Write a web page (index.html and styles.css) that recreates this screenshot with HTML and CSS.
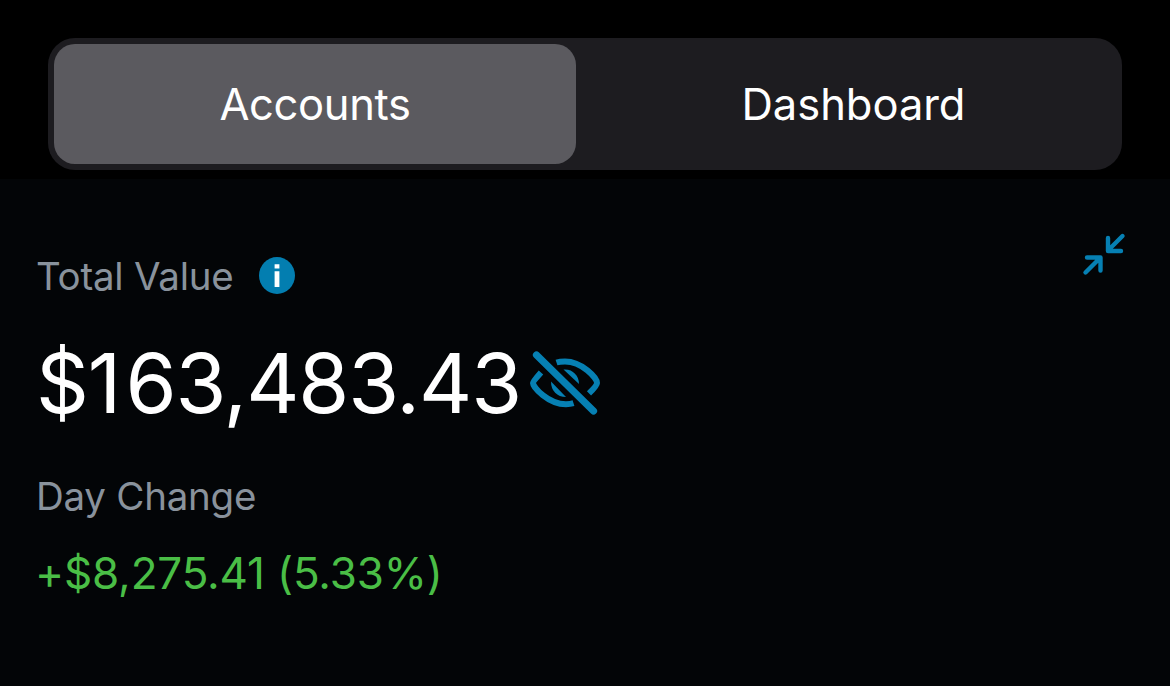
FILE: index.html
```html
<!DOCTYPE html>
<html lang="en">
<head>
    <meta charset="UTF-8">
    <meta name="viewport" content="width=device-width, initial-scale=1.0">
    <title>Accounts</title>
    <link rel="stylesheet" href="styles.css">
</head>
<body>
    <header class="header">
        <nav class="tabs">
            <a class="tab tab-accounts active">Accounts</a>
            <a class="tab tab-dashboard">Dashboard</a>
        </nav>
    </header>

    <main class="summary">
        <div class="values">
            <div class="label-row">
                <span class="label label-total">Total Value</span>
                <svg class="info-icon" viewBox="0 0 36 37">
                    <ellipse cx="18" cy="18.5" rx="18" ry="18.5" fill="#037eb0"/>
                    <path d="M15.600 7.200h4.800v4.400h-4.800zM15.600 14.200h4.800v15.800h-4.800z" fill="#fff"/>
                </svg>
            </div>
            <div class="total-row">
                <span class="total">$<span class="one">1</span>63,483.43</span>
                <svg class="eye-icon" viewBox="8 8 74 70">
                    <g fill="none" stroke="#0680b3" stroke-width="6">
                        <path d="M16.500 15L73.500 71" stroke-width="7.200" stroke-linecap="round"/>
                        <path d="M21 32.500C17 37 13 41.500 13 43C13 47 28 64.200 46 64.200C49 64.200 51 64 53.500 63.200"/>
                        <path d="M36.500 22.500C39 21.700 42 21.500 45 21.500C62 21.500 77 38 77 43C77 45.500 73 49.500 69 53.300"/>
                    </g>
                    <path d="M31 41.500C31 51 37 57 46 57z" fill="#0680b3"/>
                    <path d="M43.500 29.500C52 28.500 59 35 59 44z" fill="#0680b3"/>
                </svg>
            </div>
            <div class="label label-day">Day Change</div>
            <div class="change">+$8,275.41 (5.33%)</div>
        </div>
        <svg class="collapse-icon" viewBox="0 0 44 44">
            <g fill="none" stroke="#0680b3" stroke-width="4.400" stroke-linecap="round" stroke-linejoin="round">
                <path d="M40.500 4L26 18.500M26 6V19H39"/>
                <path d="M3.500 40.500L18 26M5 25.500H18.500V38.500"/>
            </g>
        </svg>
    </main>
</body>
</html>
```

FILE: styles.css
```css
* {
    box-sizing: border-box;
}
body {
    margin: 0;
    min-height: 686px;
    background-color: #030507;
    color: #fff;
    font-family: Inter, "Liberation Sans", sans-serif;
}
.header {
    height: 179px;
    padding: 38px 48px 0;
    background-color: #000;
}
.tabs {
    display: grid;
    grid-template-columns: 522px 1fr;
    gap: 15px;
    height: 132px;
    padding: 6px;
    border-radius: 27px;
    background-color: #1d1c20;
}
.tab {
    display: flex;
    align-items: center;
    justify-content: center;
    border-radius: 21px;
    font-size: 43.5px;
}
.tab-accounts {
    letter-spacing: -0.35px;
}
.tab-dashboard {
    letter-spacing: -0.05px;
}
.tab.active {
    background-color: #5b5a5f;
}
.summary {
    display: flex;
    justify-content: space-between;
    padding: 53px 44px 0 36px;
}
.label-row {
    display: flex;
    align-items: center;
    height: 88px;
}
.label {
    color: #89929c;
    font-size: 38.5px;
    line-height: 48px;
    letter-spacing: -0.25px;
    white-space: nowrap;
}
.label-total {
    width: 223px;
}
.info-icon {
    width: 36px;
    height: 37px;
    margin-bottom: 1px;
}
.total-row {
    display: flex;
    align-items: center;
    height: 126px;
}
.total {
    width: 492px;
    font-size: 82.5px;
    line-height: 100px;
    letter-spacing: -1.1px;
    white-space: nowrap;
}
.total .one {
    letter-spacing: 4px;
}
.eye-icon {
    width: 74px;
    height: 70px;
}
.label-day {
    margin-top: 26px;
}
.change {
    margin-top: 25px;
    color: #4abe46;
    font-size: 44px;
    line-height: 56px;
    letter-spacing: -0.15px;
    margin-left: -1px;
    white-space: nowrap;
}
.collapse-icon {
    width: 44px;
    height: 44px;
}
```
